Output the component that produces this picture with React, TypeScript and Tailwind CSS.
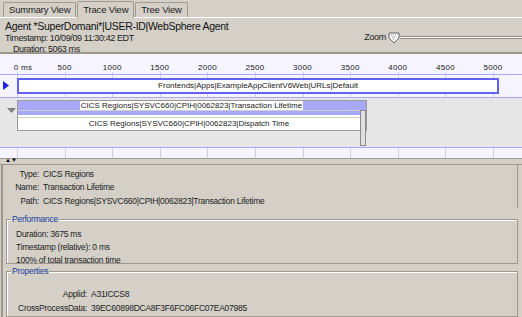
import React from "react";

const ticks = [0, 500, 1000, 1500, 2000, 2500, 3000, 3500, 4000, 4500, 5000];
const px = (ms: number) => 17 + ms * 0.0952;

function Tabs() {
  return (
    <div className="relative flex h-[18px] items-end gap-[1px] border-b border-white pl-[3px]">
      <div className="flex h-[15px] items-center rounded-t-[2px] border border-b-0 border-[#a09c94] bg-[#d4d0c8] px-[5px] text-[9.5px] tracking-[-0.2px] text-[#222]">
        Summary View
      </div>
      <div className="relative top-[1px] flex h-[17px] items-center rounded-t-[2px] border border-b-0 border-[#a09c94] bg-[#d4d0c8] px-[5px] text-[9.5px] tracking-[-0.2px] text-[#222]">
        Trace View
      </div>
      <div className="flex h-[15px] items-center rounded-t-[2px] border border-b-0 border-[#a09c94] bg-[#d4d0c8] px-[5px] text-[9.5px] tracking-[-0.2px] text-[#222]">
        Tree View
      </div>
    </div>
  );
}

function Header() {
  return (
    <div className="flex h-[36px] border-b-2 border-[#9c9890]">
      <div className="flex flex-col pl-[5px] pt-[1px]">
        <div className="text-[10.5px] leading-[14px] tracking-[-0.3px] text-[#111]">
          Agent *SuperDomani*|USER-ID|WebSphere Agent
        </div>
        <div className="text-[9px] leading-[11px] tracking-[-0.4px] text-[#222]">Timestamp: 10/09/09 11:30:42 EDT</div>
        <div className="pl-[8px] text-[9px] leading-[11px] tracking-[-0.4px] text-[#222]">Duration: 5063 ms</div>
      </div>
      <div className="ml-auto flex items-center self-start pt-[13px]">
        <span className="mr-[2px] text-[9px] tracking-[-0.3px] text-[#222]">Zoom</span>
        <svg width="12" height="12" viewBox="0 0 12 12">
          <path d="M1 1 H11 V6 L6 11 L1 6 Z" fill="#f4f4f4" stroke="#666" />
          <path d="M3 3h1M5 3h1M7 3h1M4 5h1M6 5h1M5 7h1" stroke="#999" />
        </svg>
        <div className="flex w-[122px] flex-col">
          <div className="h-[1px] bg-[#8c8880]" />
          <div className="h-[1px] bg-white" />
          <div className="h-[1px] bg-[#8c8880]" />
        </div>
      </div>
    </div>
  );
}

function Chart() {
  return (
    <div className="relative h-[107px] overflow-hidden border-b border-[#9c9890] bg-[#f6f4ff] font-['Liberation_Sans',Arial,sans-serif]">
      {ticks.map((t) => (
        <div key={t}>
          <div className="absolute top-[18px] h-[90px] w-[1px] bg-[#d0ccf8]" style={{ left: px(t) }} />
          <div
            className="absolute top-[8px] -translate-x-1/2 text-[8px] tracking-[0.3px] text-[#222]"
            style={{ left: t === 0 ? px(t) + 6 : px(t) }}
          >
            {t === 0 ? "0 ms" : t}
          </div>
        </div>
      ))}
      <div className="absolute left-0 right-0 top-[20px] h-[1px] bg-[#a8a8f8]" />
      <svg className="absolute left-[3px] top-[27px]" width="6" height="9" viewBox="0 0 6 9">
        <path d="M0 0 L6 4.5 L0 9 Z" fill="#2020e0" />
      </svg>
      <div
        className="absolute top-[24px] flex h-[16px] items-center justify-center whitespace-nowrap border-2 border-[#6060f8] bg-white text-[8px] text-[#222]"
        style={{ left: px(0), width: px(5063) - px(0) }}
      >
        Frontends|Apps|ExampleAppClientV6Web|URLs|Default
      </div>
      <div className="absolute left-0 right-0 top-[43px] h-[51px] border-y border-[#a8a8f8] bg-[#e6e6e6]" />
      <svg className="absolute left-[7px] top-[54px]" width="9" height="5" viewBox="0 0 9 5">
        <path d="M0 0 H9 L4.5 5 Z" fill="#808080" />
      </svg>
      <div
        className="absolute top-[46px] h-[31px] border border-[#9a9a9a] bg-white"
        style={{ left: px(0), width: px(3675) - px(0) }}
      >
        <div className="h-[14px] bg-[#a8a8f8]" />
        <div className="absolute left-[62px] right-[63px] top-0 flex h-[10px] items-center justify-center whitespace-nowrap bg-white text-[8px] text-[#222]">
          CICS Regions|SYSVC660|CPIH|0062823|Transaction Lifetime
        </div>
        <div className="absolute left-0 right-0 top-[9px] h-[1px] bg-[#cfcfcf]" />
        <div className="absolute left-0 right-[6px] top-[16px] flex h-[13px] items-center justify-center whitespace-nowrap border-t border-[#cfcfcf] bg-white text-[8px] text-[#222]">
          CICS Regions|SYSVC660|CPIH|0062823|Dispatch Time
        </div>
        <div className="absolute right-0 top-[9px] h-[36px] w-[6px] border border-[#8a8a8a] bg-[#e0e0e0]" />
      </div>
    </div>
  );
}

function Row({ label, value, w }: { label: string; value: string; w: string }) {
  return (
    <div className="flex h-[13.5px] items-center whitespace-nowrap text-[8.5px] tracking-[-0.25px] text-[#222]">
      <span className={`${w} text-right`}>{label}</span>
      <span className="ml-[4px]">{value}</span>
    </div>
  );
}

function Group({ title, children, className }: { title: string; children: React.ReactNode; className: string }) {
  return (
    <div className={`relative ${className} border border-[#9c9890] shadow-[inset_1px_1px_0_#fff]`}>
      <span className="absolute -top-[6px] left-[4px] bg-[#d4d0c8] px-[1px] text-[8.5px] leading-[10px] tracking-[-0.25px] text-[#1c3c9c]">
        {title}
      </span>
      {children}
    </div>
  );
}

export default function App() {
  return (
    <div className="flex h-[317px] w-[522px] flex-col overflow-hidden bg-[#d4d0c8] font-['Liberation_Sans',Arial,sans-serif]">
      <Tabs />
      <Header />
      <Chart />
      <div className="relative h-[6px] border-b border-[#9c9890]">
        <span className="absolute left-[5px] top-[-2px] text-[6px] leading-[6px] text-black">▲▼</span>
      </div>
      <div className="mx-[1px] flex flex-1 flex-col border-l-2 border-l-[#9c9890] pl-[3px] pr-[3px]">
        <div className="border-r border-[#9c9890] pt-[3px]">
          <Row label="Type:" value="CICS Regions" w="w-[33px]" />
          <Row label="Name:" value="Transaction Lifetime" w="w-[33px]" />
          <Row label="Path:" value="CICS Regions|SYSVC660|CPIH|0062823|Transaction Lifetime" w="w-[33px]" />
        </div>
        <Group title="Performance" className="mt-[11px] h-[45px]">
          <div className="pl-[9px] pt-[8px] text-[8.5px] leading-[13px] tracking-[-0.25px] text-[#222]">
            <div>Duration: 3675 ms</div>
            <div>Timestamp (relative): 0 ms</div>
            <div>100% of total transaction time</div>
          </div>
        </Group>
        <Group title="Properties" className="mt-[7px] h-[46px]">
          <div className="pt-[16px]">
            <Row label="Applid:" value="A31ICCS8" w="w-[80px]" />
            <Row label="CrossProcessData:" value="39EC60898DCA8F3F6FC06FC07EA07985" w="w-[80px]" />
          </div>
        </Group>
      </div>
    </div>
  );
}
